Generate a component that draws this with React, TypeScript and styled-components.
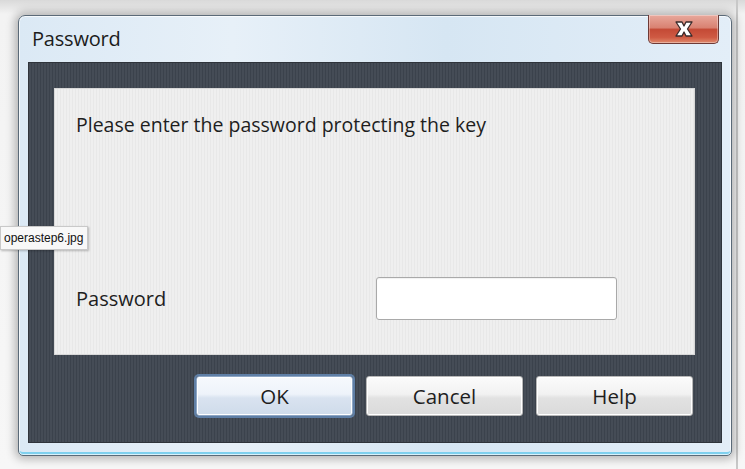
import React from "react";
import styled, { createGlobalStyle } from "styled-components";

const Global = createGlobalStyle`
  html, body { margin: 0; padding: 0; }
  body {
    width: 745px; height: 469px; overflow: hidden;
    background: linear-gradient(180deg, #d9d9d9 0px, #f3f3f3 14px, #f7f7f7 100%);
    font-family: "Open Sans", "Noto Sans", sans-serif;
  }
`;

const Stage = styled.div`
  position: relative;
  width: 745px;
  height: 469px;
  padding: 15px 0 0 18px;
  box-sizing: border-box;
`;

const EdgeLine = styled.div`
  position: absolute;
  top: 0; bottom: 0; left: 736px;
  width: 2px;
  background: #c8c8c8;
`;

const Window = styled.div`
  width: 714px;
  height: 441px;
  box-sizing: border-box;
  border: 1px solid #5b6a78;
  border-radius: 7px 7px 5px 5px;
  background: linear-gradient(90deg, #dbe9f5 0%, #e7f0f8 30%, #d6e6f3 60%, #e3eef8 100%);
  box-shadow: 0 0 10px 3px rgba(0,0,0,0.28), inset 0 0 0 1px rgba(255,255,255,0.7), inset 0 -3px 0 #7fd0ee;
  display: flex;
  flex-direction: column;
  position: relative;
`;

const TitleBar = styled.div`
  height: 46px;
  display: flex;
  align-items: center;
  padding-left: 13px;
  font-size: 20px;
  color: #1c1c1c;
  letter-spacing: -0.2px;
  padding-bottom: 2px;
  box-sizing: border-box;
`;

const CloseBtn = styled.div`
  position: absolute;
  top: -1px;
  right: 12px;
  width: 71px;
  height: 29px;
  box-sizing: border-box;
  border: 1px solid #6e3a36;
  border-top: none;
  border-radius: 0 0 5px 5px;
  background: linear-gradient(180deg, #e8a89c 0%, #d98272 45%, #c44a36 52%, #cf5a43 80%, #e08a6c 100%);
  display: flex;
  align-items: center;
  justify-content: center;
  box-shadow: inset 0 0 0 1px rgba(255,255,255,0.35);
`;

const Body = styled.div`
  flex: 1;
  margin: 0 9px 12px 9px;
  background: repeating-linear-gradient(90deg, #454c56 0px, #454c56 2px, #3b424c 2px, #3b424c 3px);
  border: 1px solid #2f343b;
  display: flex;
  flex-direction: column;
  padding: 25px 26px 0 25px;
  box-sizing: border-box;
`;

const Panel = styled.div`
  height: 267px;
  background: repeating-linear-gradient(90deg, #efefef 0px, #efefef 2px, #e8e8e8 2px, #e8e8e8 3px);
  border: 1px solid #d8d8d8;
  box-sizing: border-box;
  position: relative;
  display: flex;
  flex-direction: column;
  padding: 21px 0 0 21px;
`;

const Prompt = styled.div`
  font-size: 19.5px;
  color: #1e1e1e;
  line-height: 30px;
`;

const FieldRow = styled.div`
  margin-top: 137px;
  display: flex;
  align-items: center;
`;

const Label = styled.div`
  font-size: 20px;
  color: #1e1e1e;
  width: 300px;
`;

const Input = styled.div`
  width: 241px;
  height: 43px;
  box-sizing: border-box;
  background: #ffffff;
  border: 1px solid #a9a9a9;
  border-radius: 3px;
  box-shadow: inset 0 1px 1px rgba(0,0,0,0.06);
`;

const ButtonRow = styled.div`
  display: flex;
  justify-content: flex-end;
  gap: 13px;
  margin-top: 21px;
  padding-right: 2px;
`;

const Button = styled.div<{ $primary?: boolean }>`
  width: 157px;
  height: 40px;
  box-sizing: border-box;
  border-radius: 3px;
  border: 1px solid ${p => (p.$primary ? "#8ea6c4" : "#b8b8b8")};
  background: ${p =>
    p.$primary
      ? "linear-gradient(180deg, #f6f9fd 0%, #eef3fa 45%, #d9e3f0 55%, #cfdbea 100%)"
      : "linear-gradient(180deg, #fbfbfb 0%, #f2f2f2 45%, #e2e2e2 55%, #dadada 100%)"};
  box-shadow: ${p => (p.$primary ? "0 0 0 2px #5f7fa6, inset 0 0 0 1px #ffffff" : "inset 0 0 0 1px #ffffff")};
  display: flex;
  align-items: center;
  justify-content: center;
  font-size: 20.5px;
  color: #1e1e1e;
`;

const Tooltip = styled.div`
  position: absolute;
  left: 0;
  top: 226px;
  height: 22px;
  padding: 0 4px 0 3px;
  display: flex;
  align-items: center;
  background: #f8f8f8;
  border: 1px solid #c9c9c9;
  box-shadow: 1px 1px 2px rgba(0,0,0,0.25);
  font-family: "Liberation Sans", Arial, sans-serif;
  font-size: 12px;
  color: #111;
`;

export default function App() {
  return (
    <>
      <Global />
      <Stage>
        <EdgeLine />
        <Window>
          <TitleBar>Password</TitleBar>
          <CloseBtn>
            <svg width="28" height="18" viewBox="0 0 28 18">
              <path d="M6 2 L12 2 L14 6 L16 2 L22 2 L17.5 9 L22 16 L16 16 L14 12 L12 16 L6 16 L10.5 9 Z"
                fill="#ffffff" stroke="#3a2a2a" strokeWidth="1.3" strokeLinejoin="round" />
            </svg>
          </CloseBtn>
          <Body>
            <Panel>
              <Prompt>Please enter the password protecting the key</Prompt>
              <FieldRow>
                <Label>Password</Label>
                <Input />
              </FieldRow>
            </Panel>
            <ButtonRow>
              <Button $primary>OK</Button>
              <Button>Cancel</Button>
              <Button>Help</Button>
            </ButtonRow>
          </Body>
        </Window>
        <Tooltip>operastep6.jpg</Tooltip>
      </Stage>
    </>
  );
}
